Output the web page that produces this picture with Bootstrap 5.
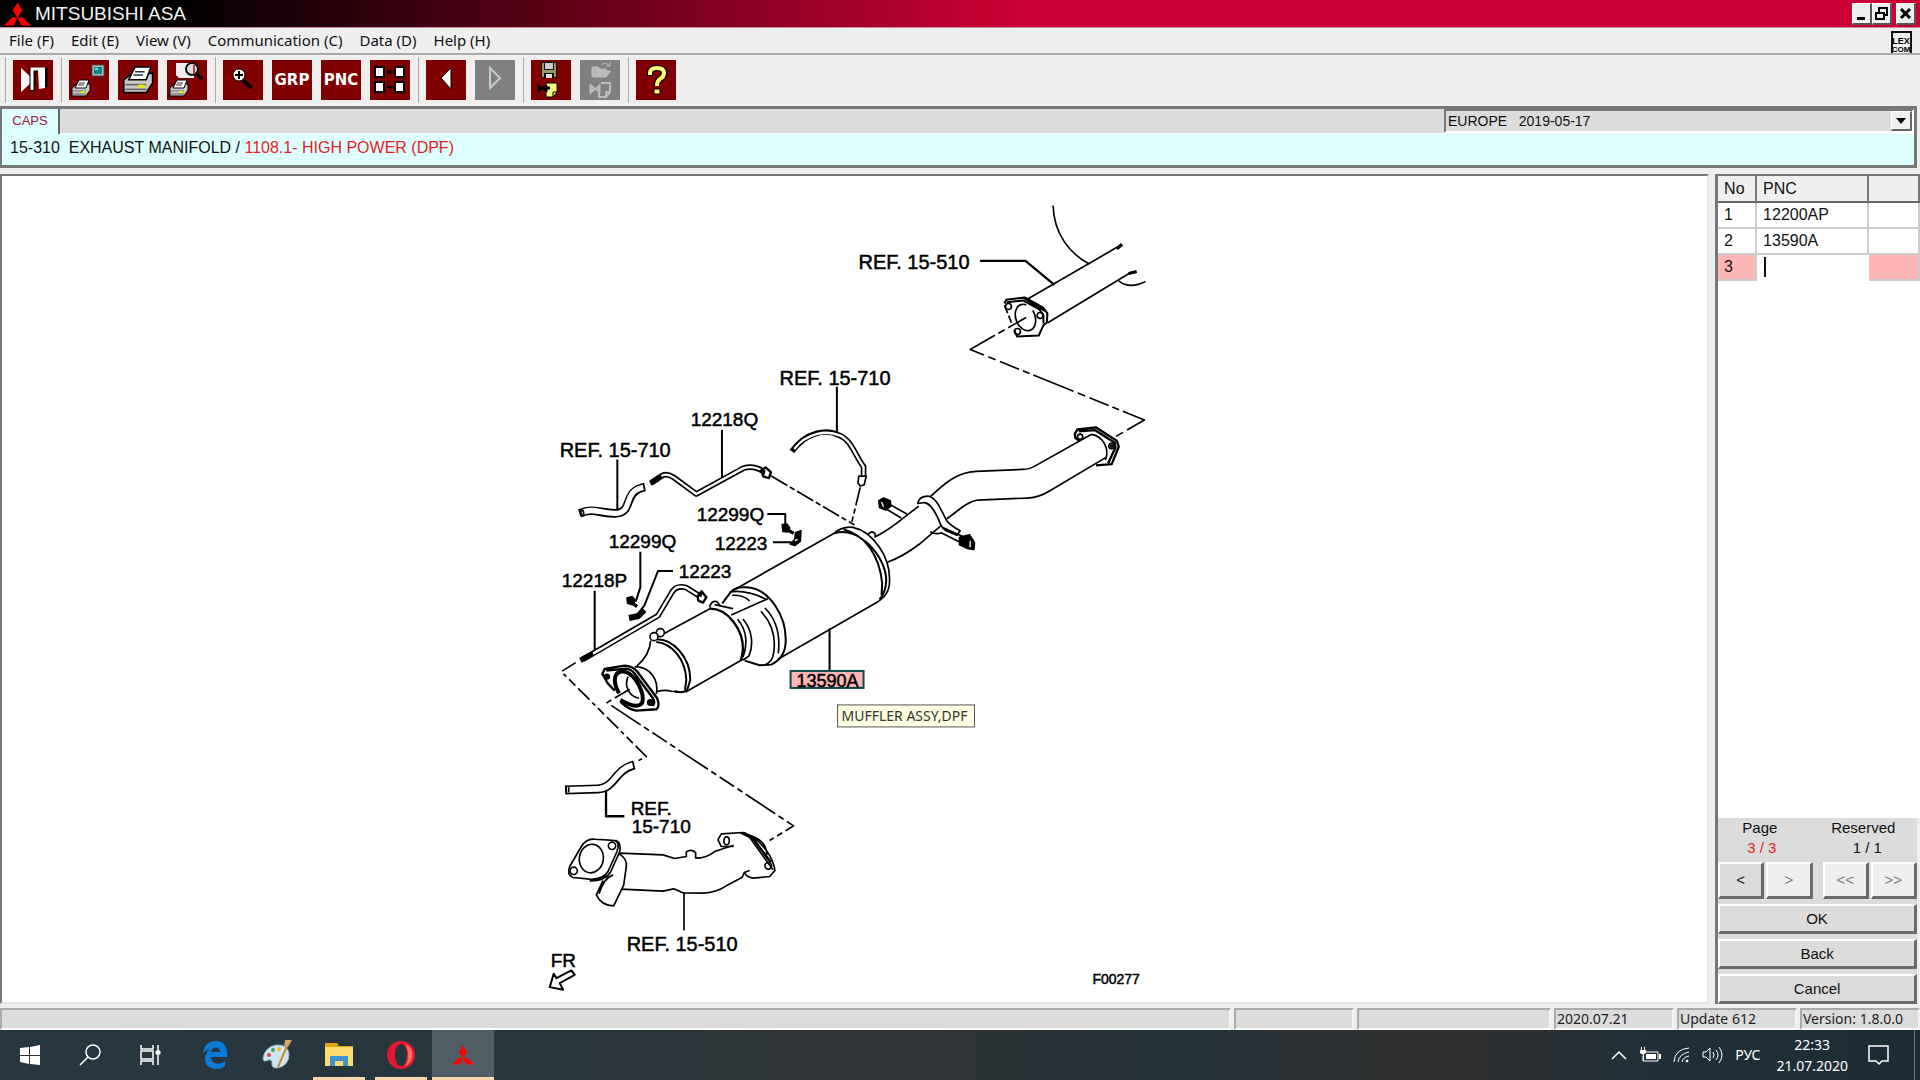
<!DOCTYPE html>
<html lang="en">
<head>
<meta charset="utf-8">
<meta name="viewport" content="width=device-width, initial-scale=1">
<title>MITSUBISHI ASA</title>
<link rel="stylesheet" href="https://cdn.jsdelivr.net/npm/bootstrap@5.3.0/dist/css/bootstrap.min.css">
<style>
body{font-family:"Liberation Sans",Arial,sans-serif;font-size:16px;line-height:20px;color:#111;background:#efefef;overflow:hidden}
button,select,input{font:inherit;color:inherit}
svg{display:block;flex:none}
.ui-font{font-family:"Noto Sans","Segoe UI",sans-serif;font-size:14px}
.title-bar{height:28px;background:linear-gradient(90deg,#000 0,#000 9%,#c03 53%);border-bottom:1px solid #c8899a}
.title-bar h1{font-size:19px;line-height:26px;color:#f4f4f4;font-weight:400}
.win-btn{width:20px;height:22px;background:#efefef;border:1px solid;border-color:#fff #555 #555 #fff;border-right-width:2px;border-bottom-width:2px}
.menu-bar{height:27px;border-bottom:2px solid #aaa;padding-left:9px;gap:17px;line-height:24px;font-size:15px}
.menu-bar a{color:#111;text-decoration:none}
.tool-bar{height:51px;padding:0 0 2px 5px}
.tool-group{gap:9px;padding:0 8px 0 7px;border-left:1px solid #aaa;height:46px}
.tool-btn{width:40px;height:40px;background:#800000;color:#fff;font:bold 15px "DejaVu Sans",sans-serif}
.tool-btn:disabled{background:#808080}
.path-panel{margin-right:3px;border:solid #777;border-width:3px 3px 3px 2px;height:62px}
.tab-strip{background:#dcdcdc;height:25px;border-bottom:1px solid #fff}
.tab-on{background:#dff;color:#a01040;font-size:13px;width:58px;height:25px;border-right:2px solid #666;line-height:24px;text-decoration:none}
.region-box{width:470px;font-size:14px;background:#dcdcdc;border:2px solid #777;border-right-color:#fff;border-bottom-color:#fff}
.region-box select{appearance:none;background:none;border:0;white-space:pre;padding:0 0 0 2px}
.drop-mark{width:21px;background:#efefef;border:1px solid;border-color:#fff #666 #666 #fff;border-right-width:2px;border-bottom-width:2px}
.crumb{background:#dff;padding:4px 8px;white-space:pre}
.c-red{color:#e51c1c}
.workspace{margin-top:6px;gap:6px}
.sheet{background:#fff;border:2px solid #777;border-right-color:#e6e6e6;border-bottom-color:#e6e6e6}
.side{width:205px;background:#fff;border:solid #777;border-width:2px 0 0 3px}
.pnc-grid{width:100%;border-collapse:collapse;table-layout:fixed}
.pnc-grid th{background:#efefef;font-weight:400;height:26px;border-right:2px solid #777;border-bottom:2px solid #666}
.pnc-grid td{height:26px;border-right:2px solid #ccc;border-bottom:2px solid #ccc}
.pnc-grid th,.pnc-grid td{padding:0 6px}
.pnc-grid .current td{background:#ffb6b6}
.pnc-grid .current .entry{background:#fff;border-color:#fff;padding:0 0 0 7px}
.entry input{width:90px;height:20px;border:0;border-left:2px solid #111;outline:0;display:block;padding:0}
.side-foot{background:#dcdcdc;font-size:15px;border-right:3px solid #efefef}
.key{background:#dcdcdc;border:2px solid;border-color:#fff #6a6a6a #6a6a6a #fff;border-right-width:3px;border-bottom-width:3px;padding:0;line-height:20px}
.key-row{gap:2px;margin:4px 0 5px}
.key-sm{height:37px;flex:1 1 0}
.key-stack{gap:5px}
.key-lg{height:30px}
.key:disabled{background:#efefef;color:#777}
.status-bar{height:26px;padding-top:4px;gap:3px;background:#efefef}
.pane{background:#dcdcdc;border:2px solid;border-color:#aaa #f2f2f2 #fff #aaa;line-height:18px;padding:0 0 0 1px;color:#222;white-space:nowrap}
.task-bar{height:50px;color:#fff;background:linear-gradient(90deg,#263640 0,#28353b 30%,#303436 45%,#25323a 62%,#312f2e 75%,#20303a 86%,#1d2d36 100%)}
.task-btn{width:62px;height:50px;border:0;background:none;padding:0}
.task-slim{width:60px}
.task-open{box-shadow:inset 0 -3px #f7d8b0;width:52px;margin:0 5px}
.task-live{background:#515d65;box-shadow:inset 0 -3px #f7d8b0}
.task-tray{gap:12px}
.desk-edge{border-left:1px solid #6d777c;width:6px}
</style>
<script src="https://cdn.jsdelivr.net/npm/bootstrap@5.3.0/dist/js/bootstrap.bundle.min.js"></script>
</head>
<body class="vh-100 d-flex flex-column">
<header class="title-bar d-flex align-items-center">
  <svg class="ms-1" width="27" height="24" viewBox="0 0 28 24" fill="#f00"><path d="M14 0l5 8-5 8-5-8zM9 15l5 1-4 8H0zM19 15l-5 1 4 8h10z"/></svg>
  <h1 class="m-0 ms-1 flex-grow-1">MITSUBISHI ASA</h1>
  <button class="win-btn p-0" aria-label="Minimize"><svg width="16" height="18" fill="#000"><path d="M4 13h8v3H4z"/></svg></button>
  <button class="win-btn p-0 me-1" aria-label="Restore"><svg width="16" height="18" fill="none" stroke="#000" stroke-width="2"><path d="M6 9V4h8v7h-3M3 9h8v6H3z"/></svg></button>
  <button class="win-btn p-0 me-1" aria-label="Close"><svg width="16" height="18" stroke="#000" stroke-width="3"><path d="M4 5l9 9M13 5l-9 9"/></svg></button>
</header>
<nav class="menu-bar ui-font d-flex">
  <a href="#">File (F)</a><a href="#">Edit (E)</a><a href="#">View (V)</a><a href="#">Communication (C)</a><a href="#">Data (D)</a><a href="#">Help (H)</a>
  <svg class="ms-auto me-2" width="21" height="25"><path d="M1 25V4h19v21" fill="#efefef" stroke="#111" stroke-width="2"/><g font-family="Liberation Sans,Arial,sans-serif" font-size="9" font-weight="700" text-anchor="middle"><text x="10" y="16">LEX</text><text x="10" y="24" font-size="8">COM</text></g></svg>
</nav>
<div class="tool-bar d-flex align-items-center">
  <div class="tool-group d-flex align-items-center"><button class="btn rounded-0 border-0 p-0 tool-btn" aria-label="Exit"><svg width="40" height="40"><path d="M8 8l13 12L8 32z" fill="#fff"/><path d="M19 31V10h13v17" fill="none" stroke="#000" stroke-width="5"/><path d="M19 30V9h13" fill="none" stroke="#fff" stroke-width="3"/><path d="M25 10h7v18l-6 1z" fill="#fff"/><path d="M22 13v13" stroke="#000"/></svg></button></div>
  <div class="tool-group d-flex align-items-center">
    <button class="btn rounded-0 border-0 p-0 tool-btn" aria-label="Print screen"><svg width="40" height="40"><path d="M23 5h12v11H23z" fill="#bbb" stroke="#444"/><path d="M25 7h8v7h-8z" fill="#088"/><path d="M26 8h3v2h-3z" fill="#5ee"/>
      <g id="printer"><path d="M3 28l5-4h13v6l-4 6H3z" fill="#ccc" stroke="#000"/><path d="M6 28l4-8h10l-3 8z" fill="#fff" stroke="#000"/><path d="M10 23h6M9 25h6" stroke="#333"/><path d="M4 31h13M4 34h13" stroke="#666"/><path d="M12 32h4" stroke="#ee0" stroke-width="2"/></g></svg></button>
    <button class="btn rounded-0 border-0 p-0 tool-btn" aria-label="Print"><svg width="40" height="40"><g transform="translate(1 -25) scale(1.6)"><use href="#printer"/></g></svg></button>
    <button class="btn rounded-0 border-0 p-0 tool-btn" aria-label="Print preview"><svg width="40" height="40"><path d="M9 3h18v15H12l-3-3z" fill="#eee"/><circle cx="25" cy="9" r="6" fill="#ddd" stroke="#111" stroke-width="2"/><path d="M27 5v9" stroke="#a44" stroke-width="2"/><path d="M29 13l6 6" stroke="#000" stroke-width="3"/><use href="#printer"/></svg></button>
  </div>
  <div class="tool-group d-flex align-items-center">
    <button class="btn rounded-0 border-0 p-0 tool-btn" aria-label="Zoom"><svg width="40" height="40"><path d="M20 20l8 8" stroke="#000" stroke-width="4"/><circle cx="16" cy="15" r="6" fill="#fff" stroke="#000"/><path d="M16 11v8M12 15h8" stroke="#000" stroke-width="2"/></svg></button>
    <button class="btn rounded-0 border-0 p-0 tool-btn">GRP</button>
    <button class="btn rounded-0 border-0 p-0 tool-btn">PNC</button>
    <button class="btn rounded-0 border-0 p-0 tool-btn" aria-label="Tiles"><svg width="40" height="40"><path d="M5 7h9v10H5zM25 7h9v10h-9zM5 22h9v10H5zM25 22h9v10h-9z" fill="#fff" stroke="#000" stroke-width="2"/><path d="M17 12h4M17 27h4" stroke="#000" stroke-width="2"/><path d="M19 9l4 3-4 3zM19 24l4 3-4 3z"/></svg></button>
  </div>
  <div class="tool-group d-flex align-items-center">
    <button class="btn rounded-0 border-0 p-0 tool-btn" aria-label="Previous"><svg width="40" height="40"><path d="M25 8v21L15 18z" fill="#fff" stroke="#000"/></svg></button>
    <button class="btn rounded-0 border-0 p-0 tool-btn opacity-100" aria-label="Next" disabled><svg width="40" height="40"><path d="M15 8v20l10-10z" fill="none" stroke="#c8c8c8" stroke-width="2"/></svg></button>
  </div>
  <div class="tool-group d-flex align-items-center">
    <button class="btn rounded-0 border-0 p-0 tool-btn" aria-label="Save"><svg width="40" height="40"><path d="M10 2h16v16H10z" fill="#111"/><path d="M11 3h2v14h-2zM23 3h2v14h-2zM11 10h14v3H11z" fill="#996"/><path d="M14 3h8v6h-8z" fill="#ccc"/><path d="M15 14h6v4h-6z" fill="#ddd"/><path d="M15 23h11v9l-4 5h-7z" fill="#ff8" stroke="#000"/><path d="M22 37v-5h4" fill="none" stroke="#000"/><path d="M7 24v9l4-4zM16 25v7l-5-3z" stroke="#000"/><path d="M8 28h11" stroke="#000" stroke-width="3"/></svg></button>
    <button class="btn rounded-0 border-0 p-0 tool-btn opacity-100" aria-label="Load" disabled><svg width="40" height="40" fill="#bbb" stroke="#bbb"><path d="M12 17V7h6l2 2h6v2H16z"/><path d="M13 17l4-6h14l-5 6z"/><path d="M21 5q5-4 8 1M26 6h4V2" fill="none"/><path d="M10 24v10l6-5zM20 24v9l-5-4z"/><path d="M21 23h9v9l-4 5h-7v-5M26 37v-5h4" fill="none" stroke-width="2"/></svg></button>
  </div>
  <div class="tool-group d-flex align-items-center"><button class="btn rounded-0 border-0 p-0 tool-btn" aria-label="Help"><svg width="40" height="40" fill="none"><path d="M14 16v-3q0-5 7-5t7 5q0 4-4 6-3 2-3 7" stroke="#000" stroke-width="6"/><path d="M14 15v-2q0-5 7-5t7 5q0 4-4 6-3 2-3 7" stroke="#ff7" stroke-width="4"/><path d="M18 29h6v5h-6z" fill="#ff7" stroke="#000"/></svg></button></div>
</div>
<section class="path-panel d-flex flex-column">
  <div class="tab-strip d-flex">
    <a class="tab-on text-center" href="#">CAPS</a>
    <label class="region-box d-flex ms-auto"><select class="flex-grow-1" aria-label="Region"><option>EUROPE&nbsp;&nbsp; 2019-05-17</option></select><span class="drop-mark d-flex align-items-center justify-content-center"><svg width="10" height="6"><path d="M0 0h10L5 6z"/></svg></span></label>
  </div>
  <div class="crumb flex-grow-1">15-310  EXHAUST MANIFOLD / <span class="c-red">1108.1- HIGH POWER (DPF)</span></div>
</section>
<main class="workspace d-flex flex-grow-1 overflow-hidden">
  <div class="sheet flex-grow-1 overflow-hidden">
<svg width="100%" height="100%" viewBox="2 176 1706 826" role="img" aria-label="Exhaust manifold exploded view">
<g fill="none" stroke="#000" stroke-width="5" stroke-linejoin="round">
<!-- rear pipe and its flange -->
<g transform="translate(840 190) scale(.33333)">
<path d="M641 46C643 130 690 190 750 222M566 326L835 170M625 398L875 246M838 272Q870 298 918 274"/>
<path d="M832 176l16-14M868 250l24-6" stroke-width="10"/>
<path d="M422 212H558L645 284" stroke-width="7"/>
<path d="M495 340L500 329 556 322 610 352 624 370 622 398 612 405 598 436 533 439 524 420M502 336L550 331 600 358 612 376V400M552 323L616 362" stroke-width="6"/>
<path d="M495 345L516 398" stroke-dasharray="26 8"/>
<circle cx="507" cy="349" r="9"/><circle cx="602" cy="376" r="9"/><circle cx="534" cy="424" r="9"/>
<ellipse cx="558" cy="382" rx="29" ry="41" transform="rotate(-20 558 382)" stroke-dasharray="182 26 40"/>
<path d="M560 382L392 478 915 690 828 740" stroke-dasharray="62 12 22 12 130 14 24 14"/>
<path d="M722 754L708 744 706 732 714 718 770 712 832 752 838 770 817 822 770 826M718 724L766 720 826 758 828 772 806 820" stroke-width="7"/>
<path d="M755 733C790 738 812 775 798 810"/><circle cx="722" cy="740" r="8"/><circle cx="816" cy="768" r="8"/><circle cx="816" cy="768" r="3"/>
</g>
<!-- S-shaped pipe and clamp -->
<g transform="translate(760 440) scale(.33333)">
<path d="M995 -17L830 76Q810 88 790 88L650 94C590 97 555 130 510 172M1040 52L870 153Q840 172 805 174L655 180C620 186 600 210 562 236M478 198L430 235Q390 268 345 292M543 258L480 312Q430 350 385 366"/>
<path d="M475 190Q478 168 505 168C535 174 545 215 562 242Q572 256 602 272L592 286 560 272Q545 262 540 245C525 210 510 185 490 188Z" fill="#fff"/>
<path d="M512 275Q530 285 545 278L605 308M548 262L612 290M385 190L442 222M380 207L425 234M325 284Q336 268 347 282V292"/>
<path d="M600 292L630 284 645 308 643 328 626 326 600 314zM358 182l14-8 20 8 2 16-16 12-18-8z" fill="#000"/>
<path d="M632 302v20M366 186l6 14" stroke="#fff" stroke-width="4"/>
</g>
<!-- muffler body -->
<g transform="translate(600 520) scale(.33333)">
<path d="M392 216L700 42Q728 18 760 22C820 35 872 110 870 180Q872 225 830 248L535 418"/>
<path d="M705 40C775 15 860 110 860 180Q860 215 840 238M732 28C800 45 840 110 848 190L846 225" stroke-width="6"/>
<path d="M368 250L392 218Q405 200 440 202C510 205 563 290 558 370Q555 415 515 434L480 436 435 422" stroke-width="6"/>
<path d="M395 285L505 236M390 216Q440 208 500 238M398 226Q430 224 450 243M345 254L400 266M414 298C446 335 442 380 430 412M430 297C462 335 460 380 448 408L430 420M484 274C518 310 530 350 522 400Q518 425 498 434M496 264C532 300 542 350 536 400"/>
<path d="M330 266C385 265 432 330 430 390L424 422" stroke-width="7"/>
<path d="M330 262Q335 240 352 245L362 258M195 340L335 264M258 516L430 418M153 362Q150 405 112 438M172 515Q195 508 215 514L250 517M105 440C152 440 178 480 170 522"/>
<path d="M168 358C218 355 272 410 272 480L262 512Q245 520 225 514M170 366C218 370 258 420 260 480L256 510" stroke-width="6"/>
<g fill="#fff"><circle cx="182" cy="338" r="12"/><circle cx="163" cy="350" r="12"/></g>
<path d="M45 512L24 490 8 462 15 447 75 437Q98 438 112 454L172 534Q182 560 170 568L110 572Q85 568 62 545M20 452L78 446Q96 448 104 460L160 535Q168 548 158 558" stroke-width="7"/>
<path d="M58 520C35 480 45 450 75 455C110 465 135 520 128 548Q115 570 62 540" stroke-width="12"/>
<path d="M85 470C72 500 90 530 118 535"/>
<circle cx="22" cy="470" r="7" fill="#000"/><circle cx="152" cy="548" r="8" fill="#000"/>
<path d="M690 325V452" stroke-width="6"/>
</g>
<!-- sensor pipes, hoses, brackets and leaders -->
<g transform="translate(540 350) scale(.33333)">
<path d="M892 110V250M547 240V385M233 328V480M683 492H737V525M700 577H755M302 605V712L288 755M400 663H355L315 765 300 785M165 722V905" stroke-width="6"/>
<path d="M757 304C800 245 860 235 900 256C935 270 948 318 972 350L972 385M335 398L365 378Q380 368 402 382L470 432 610 355Q640 344 672 364M130 928L355 797 398 725Q412 704 440 713L480 738" stroke-width="17"/>
<path d="M764 297C800 249 860 239 900 256C935 270 948 318 972 350V385M365 378Q380 368 402 382L470 432 610 355Q640 344 672 364M160 911L355 797 398 725Q412 704 440 713L480 738" stroke="#fff" stroke-width="7"/>
<path d="M332 400l24-14M122 931l30-16" stroke-width="16"/>
<path d="M120 490C160 472 180 490 225 490C285 490 245 425 316 411" stroke-width="26"/><path d="M126 488C160 472 180 490 225 490C285 490 245 425 311 412" stroke="#fff" stroke-width="16"/><ellipse cx="127" cy="490" rx="5" ry="9"/>
<path d="M958 378H980L974 404 962 408 955 398z" fill="#fff"/><path d="M664 362l14-10 16 14-6 18-16-4zM474 738l12-14 14 18-10 16-14-6z" fill="#fff" stroke-width="7"/><path d="M674 360l-4 14M480 740l6-12" stroke-width="9"/>
<path d="M695 378L945 525M962 412L937 515" stroke-dasharray="56 9 16 9"/>
<path d="M728 524l14-2 8 12-6 12-14-2zM262 744l16-4 8 10-8 14-14-4z" fill="#000"/><path d="M742 538l20 12M276 756l16 14" stroke-width="10"/>
<path d="M768 548l16-6-2 32-16 12-14-4 14-14z" fill="#000"/><path d="M766 572l8-4" stroke="#fff" stroke-width="4"/>
<path d="M268 804l28-6 18-18" stroke-width="18"/>
</g>
<!-- front hose and manifold -->
<g transform="translate(540 650) scale(.33333)">
<path d="M108 38L65 65 320 320 285 338" stroke-dasharray="48 12 12 12 26 12"/>
<path d="M270 118L202 158 762 528 690 572" stroke-dasharray="52 12 18 12 106 12 18 12"/>
<path d="M76 420L175 417C225 415 225 360 284 345" stroke-width="27"/><path d="M82 420L175 417C225 415 225 360 279 346" stroke="#fff" stroke-width="17"/><path d="M87 412v16"/>
<path d="M199 422V499H254" stroke-width="7"/>
<path d="M125 590Q140 565 165 568L225 572Q242 578 232 605L205 665Q190 690 150 688L100 683Q80 675 90 650ZM228 571Q246 580 240 606L212 668Q195 694 150 693"/>
<ellipse cx="155" cy="626" rx="36" ry="43" transform="rotate(8 155 626)"/><circle cx="217" cy="588" r="11"/><circle cx="102" cy="663" r="11"/>
<path d="M240 610L370 615 405 626 440 620M440 622V606Q455 596 468 608V626M468 625Q500 625 525 605L582 586M245 718L370 724 402 717 430 729 490 730Q530 728 560 708L608 682 614 668 630 662M238 612Q262 625 260 650L252 706 222 768Q185 768 170 735L190 692M220 675Q192 685 178 732"/>
<path d="M582 590L545 590 535 570 545 552 610 548 640 560Q690 600 704 650L706 662 690 680 640 685Q618 680 615 668M600 548L630 562 700 660M640 560Q680 575 682 615"/>
<path d="M612 549L640 566 694 638" stroke-width="8"/><ellipse cx="561" cy="573" rx="8" ry="12"/><circle cx="686" cy="648" r="10"/>
<path d="M433 728V842"/><path d="M30 1012L42 972 50 985 95 962 105 975 60 1000 70 1020Z" stroke-width="6"/>
</g>
</g>
<rect x="791" y="671" width="73" height="17" fill="#ffb6b6" stroke="#0c4a4a" stroke-width="2"/>
<g font-family="Liberation Sans,Arial,sans-serif" font-size="19" stroke="#000" stroke-width=".5">
<g font-size="20"><text x="859" y="269">REF. 15-510</text><text x="780" y="385">REF. 15-710</text><text x="560" y="457">REF. 15-710</text><text x="627" y="951">REF. 15-510</text></g>
<text x="691" y="426">12218Q</text><text x="697" y="521">12299Q</text><text x="715" y="550">12223</text><text x="609" y="548">12299Q</text><text x="679" y="578">12223</text><text x="562" y="587">12218P</text><text x="631" y="815">REF.</text><text x="632" y="833">15-710</text><text x="551" y="967">FR</text>
<text x="797" y="687" font-size="18">13590A</text><text x="1093" y="984" font-size="14">F00277</text></g>
<rect x="838" y="705" width="137" height="22" fill="#ffffe1" stroke="#555"/><text class="ui-font" x="842" y="721" fill="#333">MUFFLER ASSY,DPF</text>
</svg>
  </div>
  <aside class="side d-flex flex-column">
    <table class="pnc-grid">
      <colgroup><col style="width:38px"><col style="width:112px"><col></colgroup>
      <thead><tr><th>No</th><th>PNC</th><th></th></tr></thead>
      <tbody><tr><td>1</td><td>12200AP</td><td></td></tr><tr><td>2</td><td>13590A</td><td></td></tr><tr class="current"><td>3</td><td class="entry"><input type="text" aria-label="PNC"></td><td></td></tr></tbody>
    </table>
    <div class="side-foot mt-auto">
      <div class="d-flex text-center"><div class="w-50 pe-3">Page<div class="c-red ps-1">3 / 3</div></div><div class="w-50 pe-2">Reserved<div class="ps-2">1 / 1</div></div></div>
      <div class="key-row d-flex"><button class="key key-sm">&lt;</button><button class="key key-sm me-2" disabled>&gt;</button><button class="key key-sm" disabled>&lt;&lt;</button><button class="key key-sm" disabled>&gt;&gt;</button></div>
      <div class="key-stack d-flex flex-column">
        <button class="key key-lg">OK</button>
        <button class="key key-lg">Back</button>
        <button class="key key-lg">Cancel</button>
      </div>
    </div>
  </aside>
</main>
<footer class="status-bar ui-font d-flex">
  <div class="pane flex-grow-1"></div><div class="pane" style="width:120px"></div><div class="pane" style="width:194px"></div><div class="pane" style="width:120px">2020.07.21</div><div class="pane" style="width:120px">Update 612</div><div class="pane" style="width:120px">Version: 1.8.0.0</div>
</footer>
<nav class="task-bar ui-font d-flex">
  <button class="task-btn task-slim" aria-label="Start"><svg class="mx-auto" width="20" height="20" fill="#fff"><path d="M0 3l9-1v8H0zM10 2l10-2v10H10zM0 11h9v8l-9-2zM10 11h10v9l-10-1z"/></svg></button>
  <button class="task-btn task-slim" aria-label="Search"><svg class="mx-auto" width="22" height="22" fill="none" stroke="#fff" stroke-width="1.5"><circle cx="14" cy="8" r="7"/><path d="M9 13l-8 8"/></svg></button>
  <button class="task-btn task-slim" aria-label="Task view"><svg class="mx-auto" width="22" height="22" fill="none" stroke="#fff"><path d="M2 1v4h12V1M2 21v-4h12v4M2 7h12v8H2zM19 1v20" stroke-width="1.5"/><path d="M17 7h4v3h-4z" fill="#fff"/></svg></button>
  <button class="task-btn ms-1" aria-label="Edge"><svg class="mx-auto" width="26" height="28" fill="#0b7bd8"><path fill-rule="evenodd" d="M1 12C2 4 7 0 14 0c8 0 11 6 11 12v4H9c0 8 9 8 14 4v5c-6 5-20 4-20-7 0-5 3-9 6-10-4 1-6 2-8 4zm8-1h9c0-6-8-6-9 0z"/></svg></button>
  <button class="task-btn" aria-label="Paint"><svg class="mx-auto" width="30" height="30"><path d="M1 18Q3 7 14 5q12-1 13 9 0 12-12 14-6 0-5-5 0-4-4-3-5 3-5-2z" fill="#cfe5f2" stroke="#8bb"/><circle cx="7" cy="15" r="2" fill="#d44"/><circle cx="11" cy="10" r="2" fill="#4a4"/><circle cx="17" cy="9" r="2" fill="#eb3"/><path d="M25 6L16 27" stroke="#c83" stroke-width="2"/><path d="M22 6l1-6h7l-4 7z" fill="#d7a56a"/></svg></button>
  <button class="task-btn task-open" aria-label="File Explorer"><svg class="mx-auto" width="28" height="26"><path d="M0 1h12l2 3h14v20H0z" fill="#e0a414"/><path d="M0 5h28v19H0z" fill="#ffdb6e"/><path d="M5 24V14h18v10h-5v-5h-8v5z" fill="#3d94d1"/></svg></button>
  <button class="task-btn task-open" aria-label="Opera"><svg class="mx-auto" width="28" height="28"><path fill-rule="evenodd" fill="#e3192d" d="M14 0a14 14 0 100 28 14 14 0 100-28zm0 3c4 0 6 5 6 11s-2 11-6 11-6-5-6-11 2-11 6-11z"/><path d="M18 3c10 3 10 19 0 22 4-6 4-16 0-22z" fill="#ff6a63"/></svg></button>
  <button class="task-btn task-live" aria-label="Mitsubishi ASA"><svg class="mx-auto" width="22" height="20" viewBox="0 0 28 24" fill="#f00"><path d="M14 0l5 8-5 8-5-8zM9 15l5 1-4 8H0zM19 15l-5 1 4 8h10z"/></svg></button>
  <div class="task-tray ms-auto d-flex align-items-center">
    <svg width="16" height="10" fill="none" stroke="#fff" stroke-width="1.5"><path d="M1 9l7-7 7 7"/></svg>
    <svg width="22" height="16"><path d="M6 5h13v9H4V9" fill="none" stroke="#fff"/><path d="M7 7h10v5H7zM20 7h2v5h-2zM1 3h6v3L4 8 1 6zM2 0h1v3H2zM5 0h1v3H5zM4 8h1v5H4z" fill="#fff"/></svg>
    <svg width="17" height="16" fill="none" stroke="#fff"><path d="M1 15Q2 2 16 1M5 15Q6 7 16 5M9 15Q10 10 16 9"/><circle cx="14" cy="14" r="1" fill="#fff"/></svg>
    <svg width="21" height="18" fill="none" stroke="#fff"><path d="M1 6h3l4-4v13l-4-4H1zM11 6q2 3 0 6M14 4q4 5 0 10M17 1q6 8 0 16"/></svg>
    <span>РУС</span>
    <div class="text-center lh-sm ms-1"><div class="pb-1">22:33</div><div>21.07.2020</div></div>
    <svg class="ms-2 me-2" width="22" height="22" fill="none" stroke="#fff" stroke-width="1.5"><path d="M1 2h19v15h-6l-3 3-3-3H1z"/></svg>
    <span class="desk-edge align-self-stretch ms-1"></span>
  </div>
</nav>
</body>
</html>
